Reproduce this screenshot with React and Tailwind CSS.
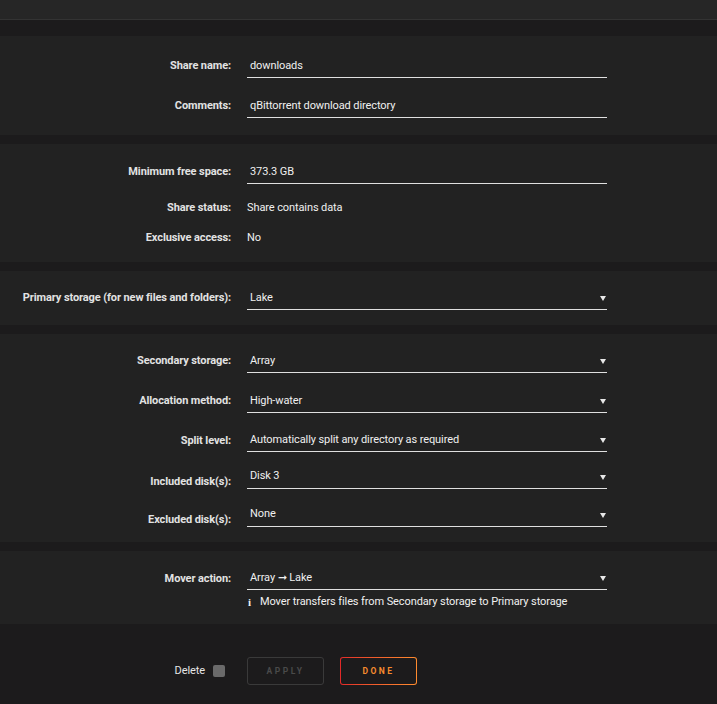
const Arrow = () => (
  <svg width="6" height="6" viewBox="0 0 6 6" className="absolute right-[1px] top-1/2 -translate-y-1/2">
    <polygon points="0,1 6,1 3,6" fill="#e8e8e8" />
  </svg>
);

const Label = ({ children, className = "" }) => (
  <div className={`w-[231px] shrink-0 text-right font-bold text-[#e2e2e2] ${className}`}>{children}</div>
);

const TextField = ({ value }) => (
  <div className="w-[360px] h-[23px] flex items-center px-[3px] border-b border-[#e0e0e0] text-[#f0f0f0]">
    {value}
  </div>
);

const SelectField = ({ value }) => (
  <div className="relative w-[360px] h-[23px] flex items-center px-[3px] border-b border-[#e0e0e0] text-[#f0f0f0]">
    {value}
    <Arrow />
  </div>
);

const MultiField = ({ value }) => (
  <div className="relative w-[360px] h-[24px] mb-[4px] pt-[3px] px-[3px] border-b border-[#e0e0e0] text-[#f0f0f0] leading-[16px]">
    {value}
    <Arrow />
  </div>
);

const Row = ({ label, h = "h-10", labelClass = "", children }) => (
  <div className={`flex items-center gap-4 ${h}`}>
    <Label className={labelClass}>{label}</Label>
    {children}
  </div>
);

const Panel = ({ className = "", children }) => (
  <div className={`bg-[#222222] ${className}`}>{children}</div>
);

export default function App() {
  return (
    <div
      className="w-[717px] h-[704px] overflow-hidden bg-[#1c1b1c] text-[11px] leading-[16px] tracking-[-0.1px]"
      style={{ fontFamily: "Roboto, 'Liberation Sans', sans-serif" }}
    >
      <div className="h-[20px] bg-[#262626] border-b border-[#333333]" />
      <div className="flex flex-col gap-[9px] pt-[16px]">
        <Panel className="pt-[10px] pb-[9px]">
          <Row label="Share name:">
            <TextField value="downloads" />
          </Row>
          <Row label="Comments:">
            <TextField value="qBittorrent download directory" />
          </Row>
        </Panel>

        <Panel className="pt-[8px] pb-[9px]">
          <Row label="Minimum free space:">
            <TextField value="373.3 GB" />
          </Row>
          <Row label="Share status:" h="h-[31px]">
            <div className="text-[#f0f0f0]">Share contains data</div>
          </Row>
          <Row label="Exclusive access:" h="h-[30px]">
            <div className="text-[#f0f0f0]">No</div>
          </Row>
        </Panel>

        <Panel className="pt-[7px] pb-[7px]">
          <Row label="Primary storage (for new files and folders):">
            <SelectField value="Lake" />
          </Row>
        </Panel>

        <Panel className="pt-[7px] pb-[6px]">
          <Row label="Secondary storage:">
            <SelectField value="Array" />
          </Row>
          <Row label="Allocation method:">
            <SelectField value="High-water" />
          </Row>
          <Row label="Split level:" h="h-[39px]">
            <SelectField value="Automatically split any directory as required" />
          </Row>
          <Row label="Included disk(s):" h="h-[38px]" labelClass="pt-[6px]">
            <MultiField value="Disk 3" />
          </Row>
          <Row label="Excluded disk(s):" h="h-[38px]" labelClass="pt-[6px]">
            <MultiField value="None" />
          </Row>
        </Panel>

        <Panel className="pt-[16px] pb-[14px]">
          <div className="flex items-center gap-4">
            <Label>Mover action:</Label>
            <SelectField value="Array ➞ Lake" />
          </div>
          <div className="flex gap-4 mt-[4px]">
            <div className="w-[231px] shrink-0" />
            <div className="flex items-center text-[#f0f0f0]">
              <span className="w-[13px] pl-[1px] font-bold" style={{ fontFamily: "'Liberation Serif', serif" }}>i</span>
              Mover transfers files from Secondary storage to Primary storage
            </div>
          </div>
        </Panel>
      </div>

      <div className="flex items-center gap-4 pt-[33px]">
        <div className="w-[231px] shrink-0 flex items-center justify-end gap-2 pr-[6px] text-[#e6e6e6]">
          Delete
          <div className="w-[12px] h-[12px] rounded-[2px] bg-[#6a6a6a]" />
        </div>
        <div className="w-[77px] h-[28px] rounded-[3px] border border-[#3a3a3a] flex items-center justify-center text-[8.5px] font-bold tracking-[2.5px] text-[#4a4a4a]">
          APPLY
        </div>
        <div className="w-[77px] h-[28px] rounded-[3px] p-[1px] bg-gradient-to-r from-[#e22828] to-[#ff8c2f]">
          <div className="w-full h-full rounded-[2px] bg-[#1c1b1c] flex items-center justify-center text-[8.5px] font-bold tracking-[2.5px] text-[#f68b2e]">
            DONE
          </div>
        </div>
      </div>
    </div>
  );
}
